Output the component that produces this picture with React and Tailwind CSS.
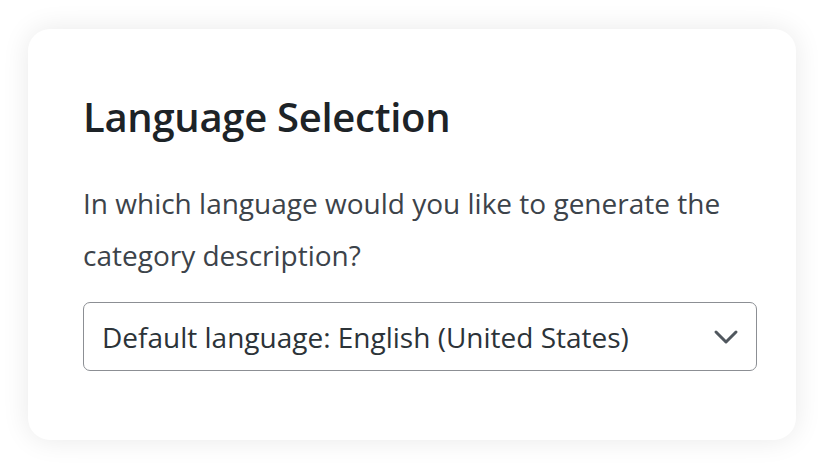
export default function App() {
  return (
    <div className="w-[818px] h-[465px] bg-white pt-[29px] pl-[28px]" style={{ fontFamily: '"Open Sans", "Noto Sans", sans-serif' }}>
      <div className="w-[768px] h-[411px] rounded-[22px] bg-white shadow-[0_0_28px_rgba(0,0,0,0.09)] pl-[55px] pr-[39px] pt-[64px]">
        <h2 className="text-[40px] leading-[48px] font-semibold text-[#1d2327] tracking-[-0.3px]">Language Selection</h2>
        <p className="mt-[36px] text-[28px] leading-[52px] text-[#3c434a]">
          In which language would you like to generate the category description?
        </p>
        <div className="mt-[21px] h-[69px] rounded-[7px] border border-[#8c8f94] flex items-center justify-between pl-[18px] pr-[17px]">
          <span className="text-[28px] text-[#2c3338]">Default language: English (United States)</span>
          <svg width="26" height="16" viewBox="0 0 26 16" fill="none" stroke="#50575e" strokeWidth="3" strokeLinecap="round" strokeLinejoin="round">
            <path d="M3 3l10 10 10-10" />
          </svg>
        </div>
      </div>
    </div>
  )
}
